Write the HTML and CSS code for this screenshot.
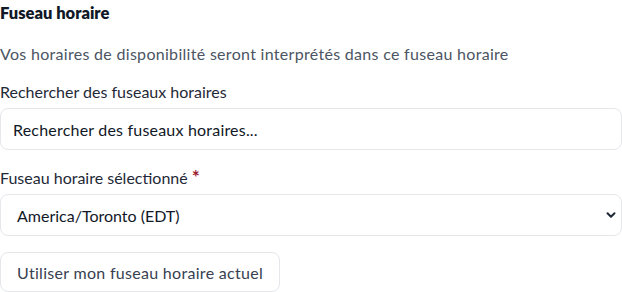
FILE: index.html
```html
<!DOCTYPE html>
<html lang="fr">
<head>
    <meta charset="UTF-8">
    <meta name="viewport" content="width=device-width, initial-scale=1.0">
    <title>Fuseau horaire</title>
    <link rel="stylesheet" href="styles.css">
</head>
<body>
    <section class="timezone">
        <h2>Fuseau horaire</h2>
        <p class="hint">Vos horaires de disponibilité seront interprétés dans ce fuseau horaire</p>

        <div class="field first">
            <label for="search">Rechercher des fuseaux horaires</label>
            <input class="input" id="search" type="text" placeholder="Rechercher des fuseaux horaires...">
        </div>

        <div class="field">
            <label for="tz">Fuseau horaire sélectionné <span class="required">*</span></label>
            <div class="select-wrap">
                <select class="input select" id="tz">
                    <option>America/Toronto (EDT)</option>
                </select>
                <svg class="chevron" width="12" height="12" viewBox="0 0 12 12">
                    <path d="M2.5 4.2 6 7.7 9.5 4.2" fill="none" stroke="#1f2937" stroke-width="2" stroke-linecap="round" stroke-linejoin="round"/>
                </svg>
            </div>
        </div>

        <button class="button" type="button">Utiliser mon fuseau horaire actuel</button>
    </section>
</body>
</html>
```

FILE: styles.css
```css
body {
    margin: 0;
    font-family: Lato, "Noto Sans", sans-serif;
    background-color: #fff;
    color: #1f2937;
}

.timezone {
    display: flex;
    flex-direction: column;
    align-items: flex-start;
}

h2 {
    margin: 1px 0 0;
    font-size: 16.5px;
    line-height: 24px;
    font-weight: 800;
    color: #111827;
}

.hint {
    margin: 17px 0 0;
    font-size: 16px;
    line-height: 24px;
    letter-spacing: 0.3px;
    color: #4b5563;
}

.field {
    display: flex;
    flex-direction: column;
    gap: 4px;
    width: 100%;
    margin-top: 16px;
}

.field.first {
    margin-top: 14px;
}

label {
    font-size: 16px;
    line-height: 24px;
    color: #1f2937;
}

.required {
    color: #9b1c31;
    font-size: 19px;
    font-weight: 700;
    line-height: 16px;
}

.input {
    box-sizing: border-box;
    width: 100%;
    height: 42px;
    padding: 0 12px;
    font-family: inherit;
    font-size: 16px;
    letter-spacing: 0.2px;
    color: #111827;
    background-color: #fff;
    border: 1px solid #e5e7eb;
    border-radius: 8px;
    outline: none;
}

.input::placeholder {
    color: #111827;
    opacity: 1;
}

.select-wrap {
    position: relative;
}

.select {
    appearance: none;
    padding-left: 16px;
    letter-spacing: 0;
}

.chevron {
    position: absolute;
    right: 5px;
    top: 15px;
    pointer-events: none;
}

.button {
    margin-top: 16px;
    height: 40px;
    padding: 0 16px;
    font-family: inherit;
    font-size: 16px;
    letter-spacing: 0.3px;
    color: #374151;
    background-color: #fff;
    border: 1px solid #e5e7eb;
    border-radius: 8px;
    cursor: pointer;
}
```
